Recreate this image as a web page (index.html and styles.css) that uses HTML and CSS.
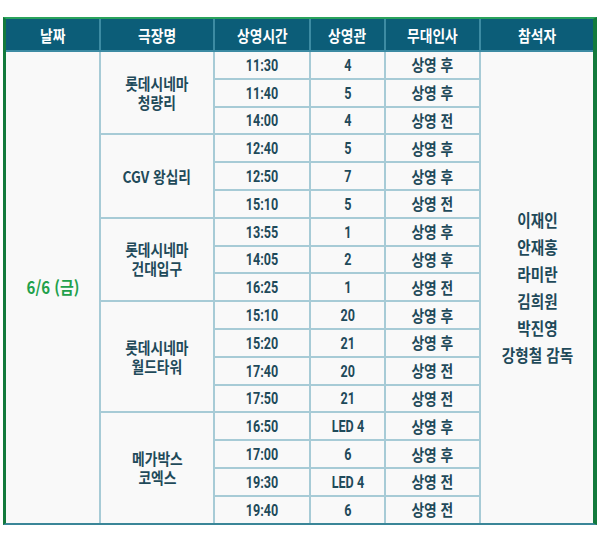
FILE: index.html
```html
<!DOCTYPE html>
<html lang="ko">
<head>
<meta charset="utf-8">
<link rel="stylesheet" href="styles.css">
</head>
<body>
<div class="frame">
<table class="sched">
<colgroup>
<col class="c1"><col class="c2"><col class="c3"><col class="c4"><col class="c5"><col class="c6">
</colgroup>
<thead>
<tr><th><span class="t">날짜</span></th><th><span class="t">극장명</span></th><th><span class="t">상영시간</span></th><th><span class="t">상영관</span></th><th><span class="t">무대인사</span></th><th><span class="t">참석자</span></th></tr>
</thead>
<tbody>
<tr><td rowspan="17" class="date"><span class="t">6/6 (금)</span></td><td rowspan="3"><span class="t">롯데시네마<br>청량리</span></td><td><span class="n">11:30</span></td><td><span class="n">4</span></td><td><span class="t">상영 후</span></td><td rowspan="17" class="cast"><span class="t">이재인<br>안재홍<br>라미란<br>김희원<br>박진영<br>강형철 감독</span></td></tr>
<tr><td><span class="n">11:40</span></td><td><span class="n">5</span></td><td><span class="t">상영 후</span></td></tr>
<tr><td><span class="n">14:00</span></td><td><span class="n">4</span></td><td><span class="t">상영 전</span></td></tr>
<tr><td rowspan="3"><span class="t">CGV 왕십리</span></td><td><span class="n">12:40</span></td><td><span class="n">5</span></td><td><span class="t">상영 후</span></td></tr>
<tr><td><span class="n">12:50</span></td><td><span class="n">7</span></td><td><span class="t">상영 후</span></td></tr>
<tr><td><span class="n">15:10</span></td><td><span class="n">5</span></td><td><span class="t">상영 전</span></td></tr>
<tr><td rowspan="3"><span class="t">롯데시네마<br>건대입구</span></td><td><span class="n">13:55</span></td><td><span class="n">1</span></td><td><span class="t">상영 후</span></td></tr>
<tr><td><span class="n">14:05</span></td><td><span class="n">2</span></td><td><span class="t">상영 후</span></td></tr>
<tr><td><span class="n">16:25</span></td><td><span class="n">1</span></td><td><span class="t">상영 전</span></td></tr>
<tr><td rowspan="4"><span class="t">롯데시네마<br>월드타워</span></td><td><span class="n">15:10</span></td><td><span class="n">20</span></td><td><span class="t">상영 후</span></td></tr>
<tr><td><span class="n">15:20</span></td><td><span class="n">21</span></td><td><span class="t">상영 후</span></td></tr>
<tr><td><span class="n">17:40</span></td><td><span class="n">20</span></td><td><span class="t">상영 전</span></td></tr>
<tr><td><span class="n">17:50</span></td><td><span class="n">21</span></td><td><span class="t">상영 전</span></td></tr>
<tr><td rowspan="4"><span class="t">메가박스<br>코엑스</span></td><td><span class="n">16:50</span></td><td><span class="n">LED 4</span></td><td><span class="t">상영 후</span></td></tr>
<tr><td><span class="n">17:00</span></td><td><span class="n">6</span></td><td><span class="t">상영 후</span></td></tr>
<tr><td><span class="n">19:30</span></td><td><span class="n">LED 4</span></td><td><span class="t">상영 전</span></td></tr>
<tr><td><span class="n">19:40</span></td><td><span class="n">6</span></td><td><span class="t">상영 전</span></td></tr>
</tbody>
</table>
</div>
</body>
</html>
```

FILE: styles.css
```css
html, body {
  margin: 0;
  padding: 0;
  background: #ffffff;
}
.frame {
  box-sizing: border-box;
  width: 594px;
  margin: 17px 0 0 3px;
  border-top: 2px solid #2aa25c;
  border-left: 3px solid #137a3c;
  border-right: 4px solid #137a3c;
  border-bottom: 2px solid #3a8698;
  background: #f9f9f9;
}
.sched {
  width: 100%;
  border-collapse: collapse;
  border-style: hidden;
  table-layout: fixed;
  font-family: "Noto Sans CJK KR", sans-serif;
  font-weight: 700;
  color: #1f4a5a;
}
.c1 { width: 94px; }
.c2 { width: 114px; }
.c3 { width: 96px; }
.c4 { width: 75px; }
.c5 { width: 95px; }
.c6 { width: 113px; }
.sched th {
  height: 31px;
  padding: 0;
  background: #0c5d78;
  color: #ffffff;
  font-size: 16px;
  line-height: 20px;
  border: 2px solid #3d8ba3;
  border-top: none;
}
.sched td {
  height: 25.8px;
  padding: 0;
  text-align: center;
  vertical-align: middle;
  border: 2px solid #a7cbd6;
  font-size: 16px;
  line-height: 19px;
}
.t {
  display: inline-block;
  transform: scaleX(0.86);
  white-space: nowrap;
}
.n {
  display: inline-block;
  font-family: Roboto, "Noto Sans CJK KR", sans-serif;
  font-size: 17px;
  font-weight: 700;
  line-height: 20px;
  transform: scaleX(0.74);
  white-space: nowrap;
}
.sched td.date {
  color: #21a04b;
}
.sched td.date .t {
  font-size: 17px;
  transform: scaleX(0.88);
}
.sched td.cast {
  font-size: 17px;
  line-height: 27px;
}
```
